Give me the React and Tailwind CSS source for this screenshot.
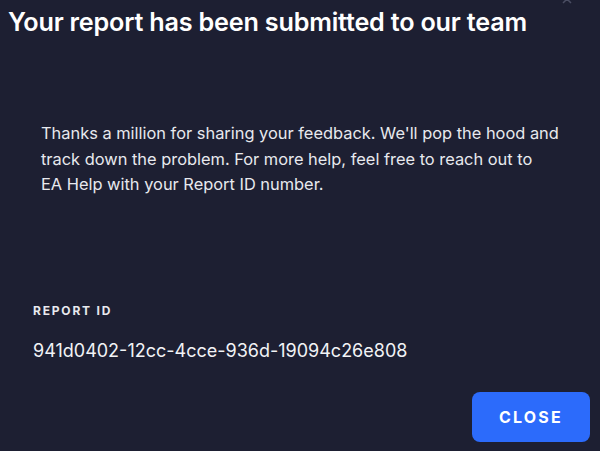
import React from 'react';

export default function App() {
  return (
    <div
      className="relative w-[600px] h-[451px] overflow-hidden bg-[#1d1f32] text-white flex flex-col"
      style={{ fontFamily: 'Inter, "Noto Sans", sans-serif' }}
    >
      <svg className="absolute right-[28px] -top-[6px]" width="10" height="10" viewBox="0 0 10 10">
        <path d="M1 1L9 9M9 1L1 9" stroke="#4a4d62" strokeWidth="1.5" />
      </svg>

      <h1 className="pl-[8px] pt-[7px] text-[25.2px] leading-[30px] font-semibold tracking-[-0.2px]">
        Your report has been submitted to our team
      </h1>

      <p className="mt-[84px] pl-[41px] pr-[20px] text-[16.4px] leading-[25.5px] text-[#e8e9ee]">
        Thanks a million for sharing your feedback. We'll pop the hood and track down the problem. For more help, feel free to reach out to
        <br />
        EA Help with your Report ID number.
      </p>

      <div className="mt-[104px] pl-[33px]">
        <div className="text-[12px] font-bold tracking-[1.8px] text-[#e8e9ee]">REPORT ID</div>
        <div className="mt-[17px] text-[18px] text-[#f2f3f6]">941d0402-12cc-4cce-936d-19094c26e808</div>
      </div>

      <div className="mt-auto mb-[9px] mr-[10px] flex justify-end">
        <button className="w-[118px] h-[50px] rounded-[8px] bg-[#2c6bfb] text-white text-[16px] font-bold tracking-[2.2px]">
          CLOSE
        </button>
      </div>
    </div>
  );
}
